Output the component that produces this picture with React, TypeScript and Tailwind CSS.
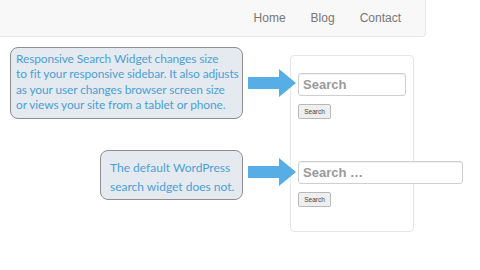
function Arrow({ className }: { className: string }) {
  return (
    <svg className={className} width="50" height="30" viewBox="0 0 50 30" aria-hidden="true">
      <path d="M0 9 H31 V1 L48 15 L31 29 V21 H0 Z" fill="#57ade6" />
    </svg>
  );
}

function SearchBox({ width, placeholder }: { width: string; placeholder: string }) {
  return (
    <div className="flex flex-col items-start">
      <div
        className={`${width} h-[23px] flex items-center px-[4px] bg-white border border-[#cfcfcf] rounded-[3px] shadow-[inset_0_1px_1px_rgba(0,0,0,0.06)]`}
      >
        <span className="text-[13px] font-bold text-[#9a9a9a] font-['Liberation_Sans',Arial,sans-serif]">
          {placeholder}
        </span>
      </div>
      <button
        type="button"
        className="mt-[8px] w-[33px] h-[15px] flex items-center justify-center bg-[#efefef] border border-[#b9b9b9] rounded-[2px] text-[6.5px] text-[#444] font-['Liberation_Sans',Arial,sans-serif]"
      >
        Search
      </button>
    </div>
  );
}

export default function App() {
  return (
    <div className="relative w-[480px] h-[270px] bg-white overflow-hidden font-['Liberation_Sans',Arial,sans-serif]">
      {/* Top navbar */}
      <nav className="w-[426px] h-[37px] bg-[#f8f8f8] border-b border-r border-[#e7e7e7] rounded-br-[4px] flex items-center justify-end gap-[25px] pr-[24px]">
        <a className="text-[12px] text-[#777]">Home</a>
        <a className="text-[12px] text-[#777]">Blog</a>
        <a className="text-[12px] text-[#777]">Contact</a>
      </nav>

      {/* Sidebar widget panel */}
      <div className="ml-[290px] mt-[18px] w-[124px] h-[177px] border border-[#e6e6e6] rounded-[4px] pl-[7px] pt-[17px]">
        <SearchBox width="w-[108px]" placeholder="Search" />
        <div className="mt-[42px]">
          <SearchBox width="w-[165px]" placeholder="Search …" />
        </div>
      </div>

      {/* Annotation callouts */}
      <div className="absolute left-[10px] top-[47px] w-[233px] h-[72px] bg-[#e5eaf0] border border-[#8e8e8e] rounded-[8px] pl-[5px] pt-[3px] whitespace-nowrap text-[11.9px] leading-[15.4px] text-[#4b9fd8] font-['Lato',sans-serif] tracking-[-0.1px]">
        Responsive Search Widget changes size
        <br />
        to fit your responsive sidebar. It also adjusts
        <br />
        as your user changes browser screen size
        <br />
        or views your site from a tablet or phone.
      </div>
      <Arrow className="absolute left-[248px] top-[68px]" />

      <div className="absolute left-[100px] top-[150px] w-[143px] h-[50px] bg-[#e5eaf0] border border-[#8e8e8e] rounded-[8px] pl-[9px] pt-[7px] whitespace-nowrap text-[12px] leading-[19px] text-[#4b9fd8] font-['Lato',sans-serif]">
        The default WordPress
        <br />
        search widget does not.
      </div>
      <Arrow className="absolute left-[248px] top-[157px]" />
    </div>
  );
}
